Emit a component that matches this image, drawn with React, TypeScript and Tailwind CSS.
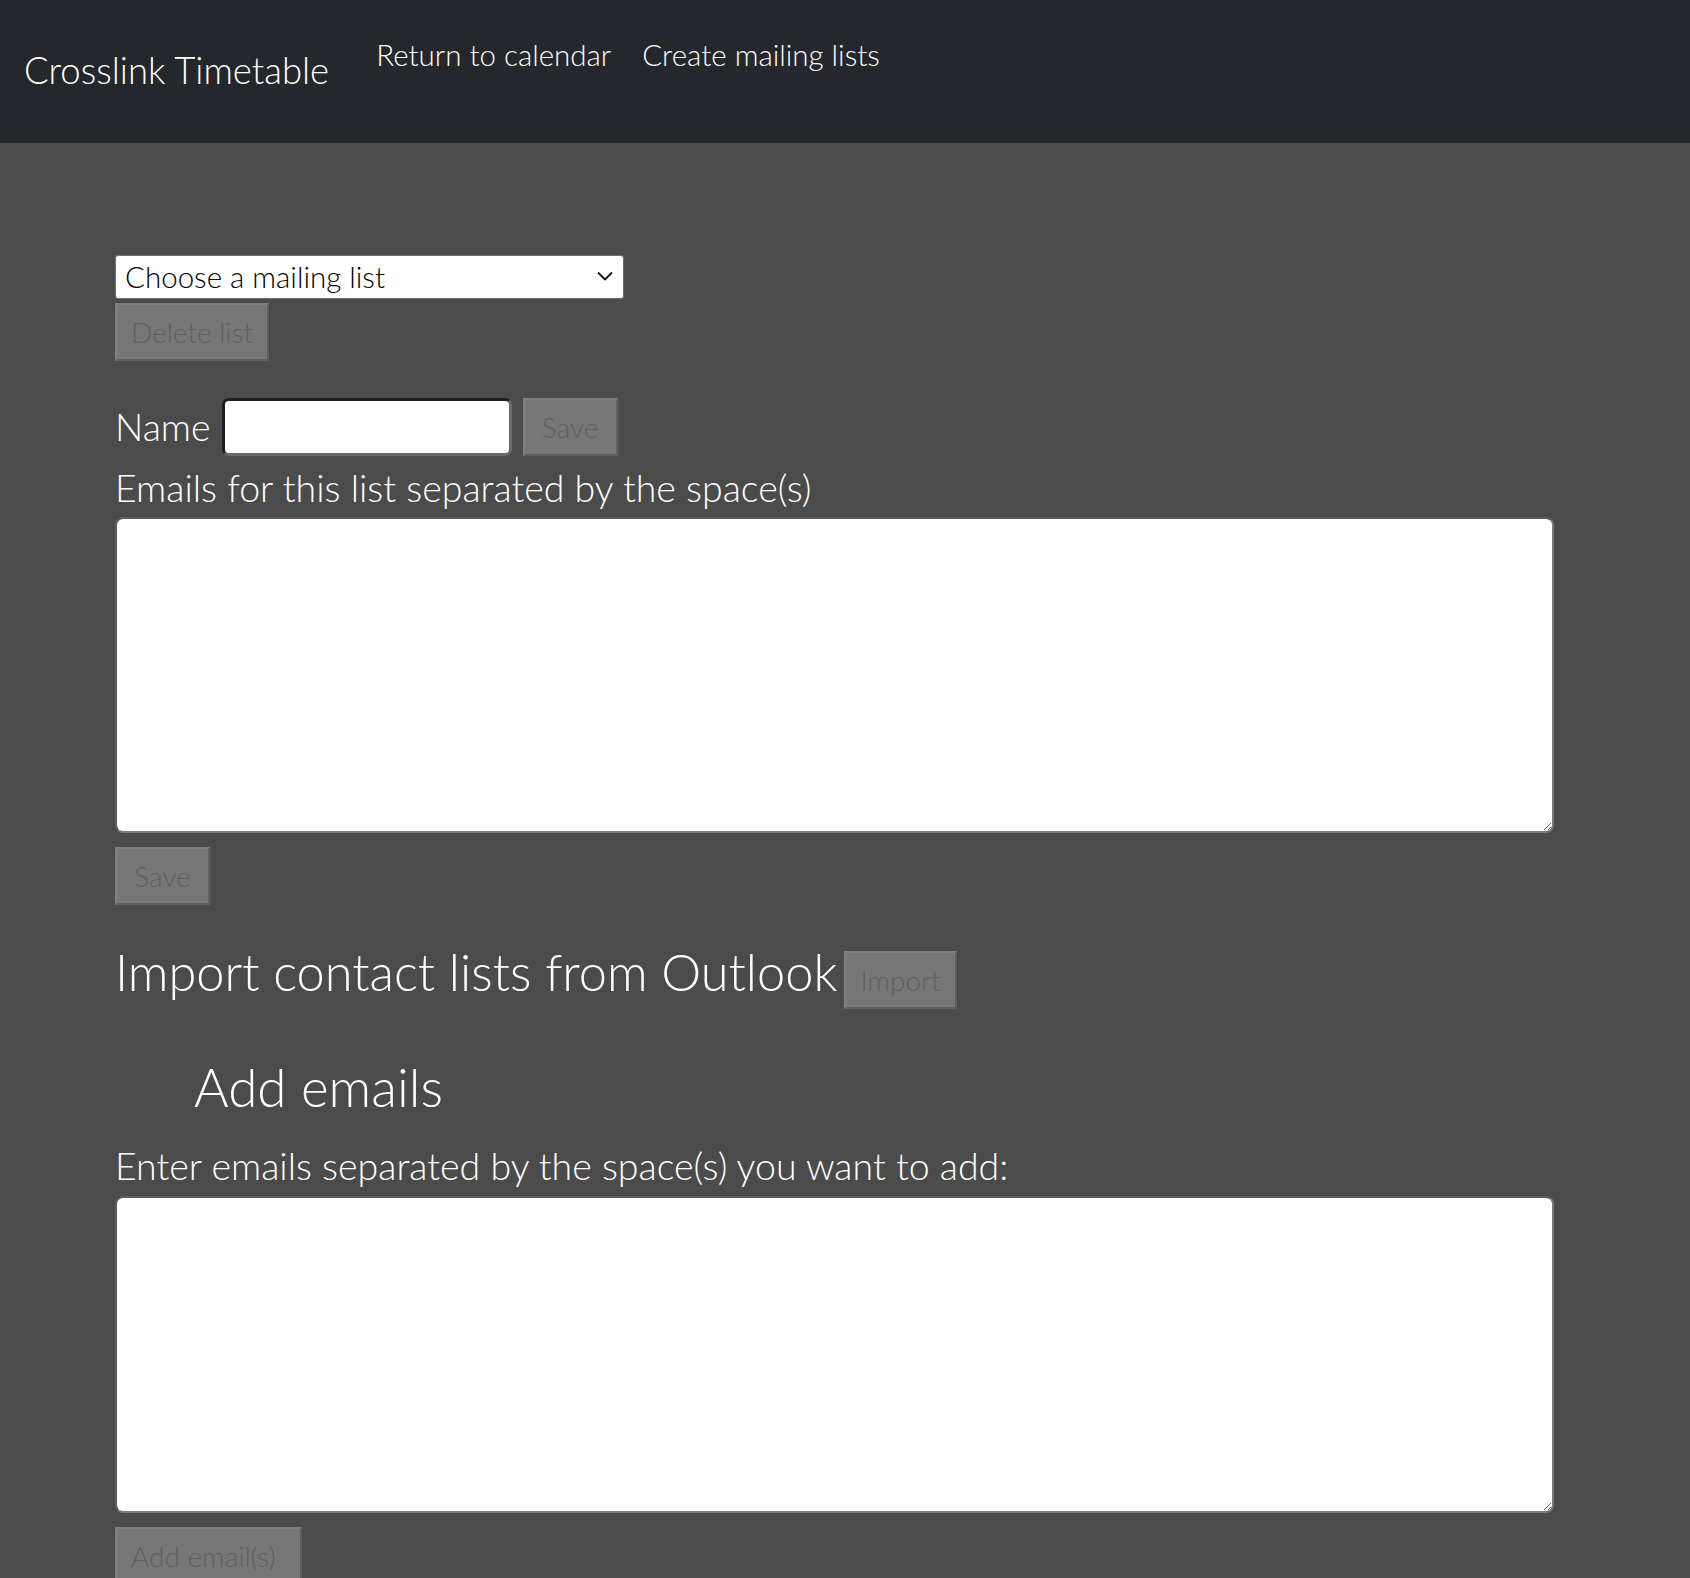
import React from 'react';

const font = { fontFamily: 'Lato, Roboto, "Liberation Sans", sans-serif' };

function GreyButton({ label, className = '' }: { label: string; className?: string }) {
    return (
        <button
            disabled
            className={`bg-[#777777] text-[#616161] text-[28px] leading-[42px] px-[14px] py-[6px] border-2 border-t-[#7f7f7f] border-l-[#7f7f7f] border-r-[#5f5f5f] border-b-[#5f5f5f] font-light ${className}`}
        >
            {label}
        </button>
    );
}

export default function App() {
    return (
        <div className="min-h-[1578px] bg-[#4b4b4b] text-white font-light" style={font}>
            {/* Navbar */}
            <nav className="h-[143px] bg-[#24272b] flex items-start">
                <a href="#" className="ml-[24px] mt-[44px] text-[36.5px] leading-[52px] text-white">
                    Crosslink Timetable
                </a>
                <div className="flex ml-[47px] mt-[34px] gap-[31px]">
                    <a href="#" className="text-[29.5px] leading-[42px] text-white">Return to calendar</a>
                    <a href="#" className="text-[29.5px] leading-[42px] text-white">Create mailing lists</a>
                </div>
            </nav>

            <main className="pl-[115px] pr-[136px] pt-[112px]">
                {/* List selector */}
                <div className="relative w-[509px]">
                    <select className="w-full h-[44px] appearance-none bg-white text-black text-[29.5px] leading-[40px] pl-[9px] pr-[40px] border border-[#6f6f6f] rounded-[3px] font-light">
                        <option>Choose a mailing list</option>
                    </select>
                    <svg className="absolute right-[10px] top-[15px] pointer-events-none" width="18" height="12" viewBox="0 0 18 12" fill="none">
                        <path d="M2 2.5 L9 9.5 L16 2.5" stroke="#111" strokeWidth="1.8" />
                    </svg>
                </div>
                <GreyButton label="Delete list" className="mt-[4px]" />

                {/* Name */}
                <div className="flex items-center mt-[36px] h-[60px]">
                    <span className="text-[37.5px] leading-[54px]">Name</span>
                    <input
                        type="text"
                        className="ml-[11px] w-[290px] h-[58px] bg-white rounded-[7px] border-[3px] border-t-[#1e1e1e] border-l-[#1e1e1e] border-r-[#6a6a6a] border-b-[#6a6a6a] outline-none"
                    />
                    <GreyButton label="Save" className="ml-[11px] w-[95px]" />
                </div>

                <div className="text-[37.5px] leading-[54px] mt-[4px]">Emails for this list separated by the space(s)</div>
                <textarea className="block w-[1439px] h-[316px] bg-white rounded-[8px] border-2 border-t-[#5c5c5c] border-l-[#5c5c5c] border-r-[#7a7a7a] border-b-[#7a7a7a] mt-[2px]" />
                <GreyButton label="Save" className="mt-[14px] w-[95px]" />

                {/* Import */}
                <div className="flex items-end mt-[34px]">
                    <h3 className="text-[50.5px] leading-[66px]">Import contact lists from Outlook</h3>
                    <GreyButton label="Import" className="ml-[7px] mb-[-4px]" />
                </div>

                {/* Add emails */}
                <h3 className="text-[53px] leading-[66px] ml-[79px] mt-[49px]">Add emails</h3>
                <div className="text-[37.5px] leading-[54px] mt-[19px]">Enter emails separated by the space(s) you want to add:</div>
                <textarea className="block w-[1439px] h-[317px] bg-white rounded-[8px] border-2 border-t-[#5c5c5c] border-l-[#5c5c5c] border-r-[#7a7a7a] border-b-[#7a7a7a] mt-[3px]" />
                <GreyButton label="Add email(s)" className="mt-[14px] w-[187px] text-left" />
            </main>
        </div>
    );
}
